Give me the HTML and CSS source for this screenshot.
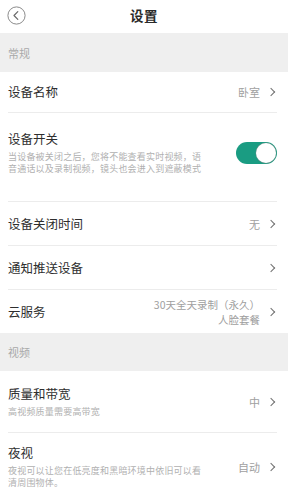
FILE: index.html
```html
<!DOCTYPE html>
<html lang="zh">
<head>
<meta charset="utf-8">
<link rel="stylesheet" href="styles.css">
</head>
<body>
<div class="page">
  <header class="topbar">
    <svg class="back" width="19" height="19" viewBox="0 0 19 19">
      <circle cx="9.5" cy="9.5" r="8.6" fill="none" stroke="#8a8a8a" stroke-width="1"/>
      <path d="M10.8 5.6 L7 9.5 L10.8 13.4" fill="none" stroke="#6a6a6a" stroke-width="1.2" stroke-linecap="round" stroke-linejoin="round"/>
    </svg>
    <div class="title">设置</div>
  </header>

  <div class="section">常规</div>

  <div class="row r-name">
    <div class="main"><div class="label">设备名称</div></div>
    <div class="value">卧室</div>
    <span class="chev"></span>
  </div>

  <div class="row r-switch">
    <div class="main">
      <div class="label">设备开关</div>
      <div class="desc">当设备被关闭之后，您将不能查看实时视频，语音通话以及录制视频，镜头也会进入到遮蔽模式</div>
    </div>
    <div class="toggle"><span class="knob"></span></div>
  </div>

  <div class="row r-plain">
    <div class="main"><div class="label">设备关闭时间</div></div>
    <div class="value">无</div>
    <span class="chev"></span>
  </div>

  <div class="row r-plain">
    <div class="main"><div class="label">通知推送设备</div></div>
    <span class="chev"></span>
  </div>

  <div class="row r-plain last">
    <div class="main"><div class="label">云服务</div></div>
    <div class="value multi"><div>30天全天录制（永久）</div><div>人脸套餐</div></div>
    <span class="chev"></span>
  </div>

  <div class="section s2">视频</div>

  <div class="row r-quality">
    <div class="main">
      <div class="label">质量和带宽</div>
      <div class="desc">高视频质量需要高带宽</div>
    </div>
    <div class="value">中</div>
    <span class="chev"></span>
  </div>

  <div class="row r-night last">
    <div class="main">
      <div class="label">夜视</div>
      <div class="desc">夜视可以让您在低亮度和黑暗环境中依旧可以看清周围物体。</div>
    </div>
    <div class="value">自动</div>
    <span class="chev"></span>
  </div>
</div>
</body>
</html>
```

FILE: styles.css
```css
* { box-sizing: border-box; }
html, body { margin: 0; padding: 0; background: #ffffff; }
body {
  font-family: "Noto Sans CJK SC", "Noto Sans", sans-serif;
  color: #333333;
  width: 288px;
  height: 500px;
  overflow: hidden;
}
.page { display: flex; flex-direction: column; }

.topbar {
  height: 33px;
  display: flex;
  align-items: center;
  justify-content: center;
  position: relative;
  background: #ffffff;
  padding-bottom: 3px;
}
.back { position: absolute; left: 7px; top: 6px; }
.title { font-size: 13.5px; font-weight: 700; color: #2a2a2a; letter-spacing: 0.5px; }

.section {
  height: 39px;
  background: #efefef;
  color: #a9a9a9;
  font-size: 11px;
  display: flex;
  align-items: center;
  padding-left: 8px;
}
.s2 { height: 38px; }

.row {
  margin: 0 11px 0 8px;
  display: flex;
  align-items: center;
  border-bottom: 1px solid #ececec;
}
.row.last { border-bottom: none; }
.main { flex: 1; min-width: 0; }
.label { font-size: 12.5px; color: #2e2e2e; line-height: 16px; }
.desc {
  font-size: 9px;
  color: #b0b0b0;
  line-height: 12px;
  width: 198px;
  letter-spacing: 0.2px;
  margin-top: 4px;
}
.value { font-size: 11px; color: #a0a0a0; margin-right: 8px; }
.value.multi { text-align: right; font-size: 10.5px; line-height: 15px; }

.chev {
  width: 6px;
  height: 6px;
  border-right: 1.6px solid #707070;
  border-top: 1.6px solid #707070;
  transform: rotate(45deg);
  margin-right: 3px;
}

.r-name { height: 41px; }
.r-switch { height: 89px; padding-bottom: 8px; }
.r-plain { height: 44px; }
.r-plain.last { height: 43px; }
.r-quality { height: 62px; }
.r-night { height: 80px; padding-bottom: 12px; }

.toggle {
  width: 41px;
  height: 22px;
  border-radius: 11px;
  background: #1a9c82;
  position: relative;
}
.knob {
  position: absolute;
  right: 1px;
  top: 1px;
  width: 20px;
  height: 20px;
  border-radius: 50%;
  background: #ffffff;
  box-shadow: 0 0 0 0.5px #5a8f84;
}
```
